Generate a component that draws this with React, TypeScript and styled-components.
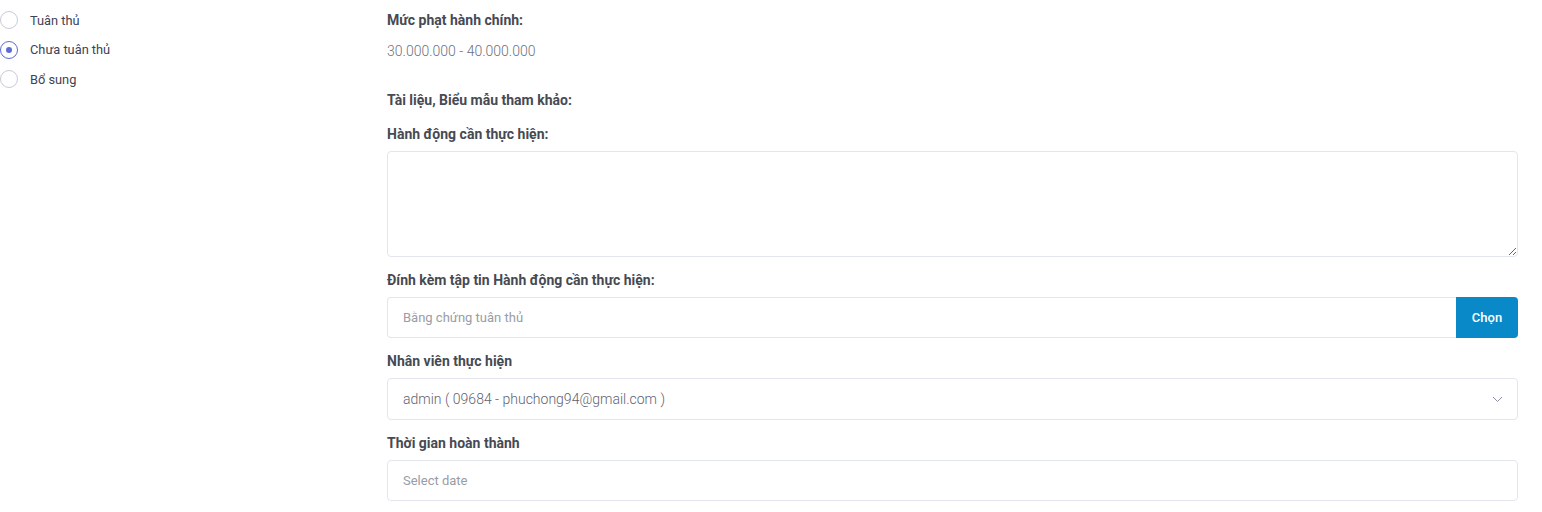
import React from 'react'
import styled, { createGlobalStyle } from 'styled-components'

const GlobalStyle = createGlobalStyle`
    body {
        margin: 0;
        background: #ffffff;
        font-family: Roboto, 'Noto Sans', Arial, sans-serif;
    }
    * {
        box-sizing: border-box;
    }
`

const Page = styled.div`
    display: flex;
    width: 1542px;
    height: 512px;
    overflow: hidden;
`

const LeftColumn = styled.div`
    width: 387px;
    flex-shrink: 0;
    display: flex;
    flex-direction: column;
    padding-top: 10px;
    gap: 9.5px;
`

const RadioRow = styled.label`
    display: flex;
    align-items: center;
    gap: 12px;
    height: 20px;
    font-size: 12.8px;
    color: #3f4254;
    cursor: pointer;
`

const RadioCircle = styled.span<{ checked?: boolean }>`
    width: 18px;
    height: 18px;
    border-radius: 50%;
    border: 1px solid ${({ checked }) => (checked ? '#5d6bd6' : '#c9cbd6')};
    display: flex;
    align-items: center;
    justify-content: center;

    &::after {
        content: '';
        width: 6px;
        height: 6px;
        border-radius: 50%;
        background: #5d6bd6;
        display: ${({ checked }) => (checked ? 'block' : 'none')};
    }
`

const RightColumn = styled.div`
    width: 1131px;
    display: flex;
    flex-direction: column;
    padding-top: 10px;
`

const Label = styled.div<{ mb?: number }>`
    font-size: 14px;
    font-weight: 700;
    line-height: 20px;
    color: #464a53;
    margin-bottom: ${({ mb }) => mb ?? 7}px;
`

const Value = styled.div`
    font-size: 14px;
    font-weight: 300;
    line-height: 20px;
    color: #6e7180;
    margin-bottom: 29px;
`

const Field = styled.div`
    margin-bottom: 13px;
`

const TextArea = styled.textarea`
    display: block;
    width: 100%;
    height: 106px;
    border: 1px solid #e4e6ef;
    border-radius: 4px;
    resize: vertical;
    font-family: inherit;
    font-size: 14px;
    padding: 10px 16px;
    outline: none;
`

const InputGroup = styled.div`
    display: flex;
    height: 41px;
`

const Input = styled.input`
    flex: 1;
    height: 100%;
    border: 1px solid #e4e6ef;
    border-right: none;
    border-radius: 4px 0 0 4px;
    padding: 0 15px;
    font-family: inherit;
    font-size: 13px;
    color: #3f4254;
    outline: none;

    &::placeholder {
        color: #9a9ca6;
    }
`

const PickButton = styled.button`
    width: 62px;
    height: 100%;
    border: none;
    border-radius: 0 4px 4px 0;
    background: #0a89c8;
    color: #ffffff;
    font-family: inherit;
    font-size: 13px;
    font-weight: 500;
    cursor: pointer;
`

const SelectBox = styled.div`
    height: 42px;
    border: 1px solid #e4e6ef;
    border-radius: 4px;
    display: flex;
    align-items: center;
    justify-content: space-between;
    padding: 0 14px 0 15px;
    font-size: 14px;
    font-weight: 300;
    color: #5f6270;
`

const DateInput = styled.input`
    display: block;
    width: 100%;
    height: 41px;
    border: 1px solid #e4e6ef;
    border-radius: 4px;
    padding: 0 15px;
    font-family: inherit;
    font-size: 13px;
    outline: none;

    &::placeholder {
        color: #9a9ca6;
    }
`

const options = [
    { label: 'Tuân thủ', checked: false },
    { label: 'Chưa tuân thủ', checked: true },
    { label: 'Bổ sung', checked: false },
]

export default function App() {
    return (
        <>
            <GlobalStyle />
            <Page>
                <LeftColumn>
                    {options.map((o) => (
                        <RadioRow key={o.label}>
                            <RadioCircle checked={o.checked} />
                            {o.label}
                        </RadioRow>
                    ))}
                </LeftColumn>
                <RightColumn>
                    <Label mb={11}>Mức phạt hành chính:</Label>
                    <Value>30.000.000 - 40.000.000</Value>
                    <Label mb={14}>Tài liệu, Biểu mẫu tham khảo:</Label>

                    <Field>
                        <Label>Hành động cần thực hiện:</Label>
                        <TextArea />
                    </Field>

                    <Field>
                        <Label>Đính kèm tập tin Hành động cần thực hiện:</Label>
                        <InputGroup>
                            <Input placeholder="Bằng chứng tuân thủ" />
                            <PickButton>Chọn</PickButton>
                        </InputGroup>
                    </Field>

                    <Field>
                        <Label>Nhân viên thực hiện</Label>
                        <SelectBox>
                            <span>admin ( 09684 - phuchong94@gmail.com )</span>
                            <svg width="11" height="7" viewBox="0 0 11 7" fill="none">
                                <path d="M1 1l4.5 4.5L10 1" stroke="#8a8fa3" strokeWidth="1" />
                            </svg>
                        </SelectBox>
                    </Field>

                    <Field>
                        <Label>Thời gian hoàn thành</Label>
                        <DateInput placeholder="Select date" />
                    </Field>
                </RightColumn>
            </Page>
        </>
    )
}
